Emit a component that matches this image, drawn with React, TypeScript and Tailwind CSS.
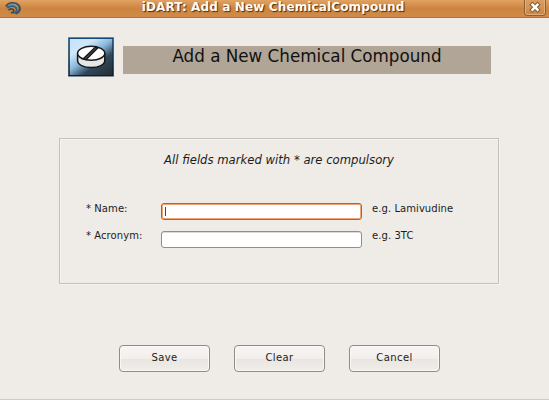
import React from "react";

function TitleBar() {
  return (
    <header className="relative flex h-[18px] items-start justify-center border-b border-[#a87343] bg-linear-to-b from-[#e2a262] via-[#cb853f] to-[#d08b48]">
      <svg className="absolute left-[5px] top-[2px]" width="17" height="13" viewBox="0 0 17 13" fill="none">
        <path d="M1 4.600C4 .3 11 .2 13.600 3.500C15.800 6.500 15 10 10.500 11.700" stroke="#3d4f5a" strokeWidth="2.200" />
        <path d="M2.300 6.200C5.300 2.700 11 4 11.600 7.200C11.900 9.300 10.700 10.600 8.500 11.100" stroke="#35617f" strokeWidth="1.800" />
        <path d="M3.400 8.200C5.600 6 9 6.900 8.700 9.300C8.500 10.400 7.300 10.800 5.800 10.500" stroke="#3d464b" strokeWidth="1.600" />
        <path d="M2.600 3.700C6 1.100 11 1.500 13.300 4.700" stroke="#6faed6" strokeWidth=".8" />
      </svg>
      <h1 className="mr-[3px] whitespace-nowrap text-[12px] leading-[15px] font-bold tracking-[0.130px] text-[#fffaf2] [text-shadow:1px_1px_1px_#4a2c10]">
        iDART: Add a New ChemicalCompound
      </h1>
      <button aria-label="Close" className="absolute right-[3px] top-[-4px] flex h-5 w-[22px] items-end justify-center rounded-[3px] border border-[#8d5f37] bg-linear-to-b from-[#dfa368] to-[#c98746] shadow-[inset_0_0_0_1px_#e2ae7a]">
        <svg width="12" height="14" viewBox="0 0 12 14">
          <path d="M3.500 3.700L8.500 8.700M8.500 3.700L3.500 8.700" stroke="#85572c" strokeWidth="4.400" strokeLinecap="square" />
          <path d="M3.500 3.700L8.500 8.700M8.500 3.700L3.500 8.700" stroke="#fff" strokeWidth="2.500" strokeLinecap="square" />
        </svg>
      </button>
    </header>
  );
}

function TabletIcon() {
  return (
    <svg className="shrink-0" width="46" height="40" viewBox="0 0 46 40">
      <defs>
        <linearGradient id="sky" x1="0.050" y1="0" x2="0.900" y2="1">
          <stop offset="0" stopColor="#c3e2fa" />
          <stop offset=".25" stopColor="#d0e7f9" />
          <stop offset=".48" stopColor="#8ab8dd" />
          <stop offset=".7" stopColor="#31485a" />
          <stop offset="1" stopColor="#27313a" />
        </linearGradient>
        <linearGradient id="frame" x1="0" y1="0" x2="0" y2="1">
          <stop offset="0" stopColor="#124a78" />
          <stop offset="1" stopColor="#121c28" />
        </linearGradient>
      </defs>
      <rect width="46" height="40" fill="#b9bfc4" />
      <rect x=".3" y=".5" width="45.400" height="38.800" fill="url(#frame)" />
      <rect x="1.800" y="2" width="42.400" height="36" fill="url(#sky)" />
      <path d="M9.600 16.300V23.500C9.600 27.700 15.600 30.500 23.200 30.500S36.800 27.700 36.800 23.500V16.300" fill="#e6e6e6" stroke="#161616" strokeWidth="1.500" />
      <ellipse cx="23.200" cy="16.300" rx="13.600" ry="7" fill="#fff" stroke="#161616" strokeWidth="1.500" />
      <path d="M27.200 10.200L29.800 11L18.200 22.700L15 22Z" fill="#444" stroke="#161616" strokeWidth="1.200" />
    </svg>
  );
}

function Field({ label, hint, focused }: { label: string; hint: string; focused?: boolean }) {
  return (
    <div className="flex h-[27px] items-start text-[10px] leading-[12px] tracking-[0.070px]">
      <label className="mt-px w-[75px] whitespace-nowrap">{label}</label>
      <div
        className={
          focused
            ? "mt-px flex h-[17px] w-[201px] items-center rounded-[3px] border border-[#b5602f] bg-white pl-[3px] shadow-[inset_0_0_0_1px_#f0a575]"
            : "mt-[2px] flex h-[17px] w-[201px] items-center rounded-[3px] border border-[#978d86] bg-white pl-[3px] shadow-[inset_0_1px_0_#dedad7]"
        }
      >
        {focused && <span className="h-[9px] w-px bg-[#444]" />}
      </div>
      <span className="mt-px ml-[10px] whitespace-nowrap">{hint}</span>
    </div>
  );
}

function ActionButton({ children }: { children: React.ReactNode }) {
  return (
    <button className="flex h-[27px] w-[91px] items-center justify-center rounded-[4px] border border-[#958b81] bg-[linear-gradient(#f8f6f4_0%,#f1eeeb_50%,#e9e5e1_51%,#f0edea_100%)] pb-[2px] text-[10px] leading-[12px] tracking-[0.400px] shadow-[inset_0_0_0_1px_#faf8f6]">
      {children}
    </button>
  );
}

export default function App() {
  return (
    <div className="h-[400px] w-[549px] overflow-hidden border-b border-[#d2cac2] bg-[#efebe7] font-['DejaVu_Sans',sans-serif] text-[#1c1c1c]">
      <TitleBar />
      <div className="mt-[19px] flex h-10 pl-[68px]">
        <TabletIcon />
        <h2 className="mt-[9px] ml-[9px] h-[28px] w-[368px] bg-[#b0a596] text-center text-[16.750px] leading-[21px] whitespace-nowrap text-[#111]">
          Add a New Chemical Compound
        </h2>
      </div>
      <section className="mt-[61px] ml-[59px] h-[146px] w-[440px] border border-[#c4c0bc] pl-[26px] shadow-[inset_1px_1px_0_#f6f4f2,1px_1px_0_#f6f4f2]">
        <p className="mr-[26px] pt-[14px] text-center text-[11.650px] leading-[14px] whitespace-nowrap italic">
          All fields marked with * are compulsory
        </p>
        <div className="mt-[35px]">
          <Field label="* Name:" hint="e.g. Lamivudine" focused />
          <Field label="* Acronym:" hint="e.g. 3TC" />
        </div>
      </section>
      <footer className="mt-[61px] flex gap-6 pl-[119px]">
        <ActionButton>Save</ActionButton>
        <ActionButton>Clear</ActionButton>
        <ActionButton>Cancel</ActionButton>
      </footer>
    </div>
  );
}
